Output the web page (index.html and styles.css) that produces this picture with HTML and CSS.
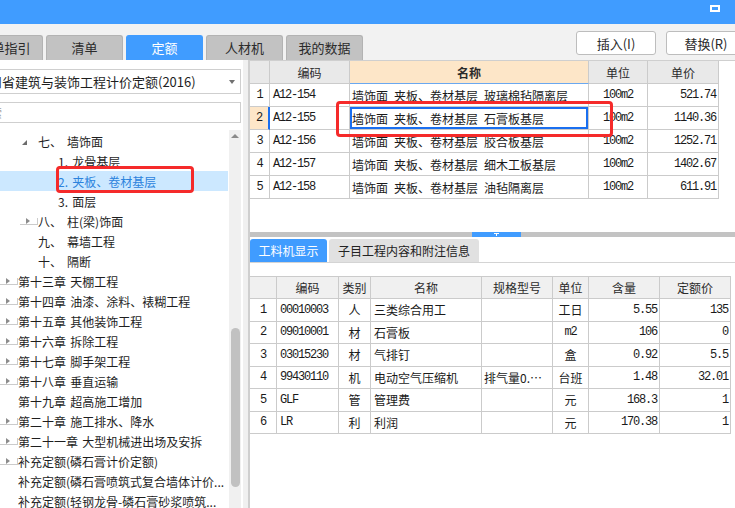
FILE: index.html
```html
<!DOCTYPE html>
<html lang="zh-CN">
<head>
<meta charset="utf-8">
<title>定额</title>
<link rel="stylesheet" href="styles.css">
</head>
<body>
<div class="titlebar"><span class="restore"></span></div>
<div class="toolbar">
  <div class="tabs">
    <div class="tab">清单指引</div>
    <div class="tab">清单</div>
    <div class="tab active">定额</div>
    <div class="tab">人材机</div>
    <div class="tab">我的数据</div>
  </div>
  <div class="actions">
    <button class="btn">插入(I)</button>
    <button class="btn">替换(R)</button>
  </div>
</div>
<div class="main">
  <aside class="left">
    <div class="select"><span class="select-text">四川省建筑与装饰工程计价定额(2016)</span><span class="caret"></span></div>
    <div class="search"><span class="search-text">索</span></div>
    <div class="tree-wrap">
      <ul class="tree">
        <li class="row l1"><span class="tw e"></span><span>七、</span><span class="ttl">墙饰面</span></li>
        <li class="row l2"><span class="tw"></span><span>1. 龙骨基层</span></li>
        <li class="row l2 sel"><span class="tw"></span><span>2. 夹板、卷材基层</span></li>
        <li class="row l2"><span class="tw"></span><span>3. 面层</span></li>
        <li class="row l1"><span class="tw c"></span><span>八、</span><span class="ttl">柱(梁)饰面</span></li>
        <li class="row l1"><span class="tw"></span><span>九、</span><span class="ttl">幕墙工程</span></li>
        <li class="row l1"><span class="tw"></span><span>十、</span><span class="ttl">隔断</span></li>
        <li class="row"><span class="tw c"></span><span>第十三章 天棚工程</span></li>
        <li class="row"><span class="tw c"></span><span>第十四章 油漆、涂料、裱糊工程</span></li>
        <li class="row"><span class="tw c"></span><span>第十五章 其他装饰工程</span></li>
        <li class="row"><span class="tw c"></span><span>第十六章 拆除工程</span></li>
        <li class="row"><span class="tw c"></span><span>第十七章 脚手架工程</span></li>
        <li class="row"><span class="tw c"></span><span>第十八章 垂直运输</span></li>
        <li class="row"><span class="tw"></span><span>第十九章 超高施工增加</span></li>
        <li class="row"><span class="tw c"></span><span>第二十章 施工排水、降水</span></li>
        <li class="row"><span class="tw c"></span><span>第二十一章 大型机械进出场及安拆</span></li>
        <li class="row"><span class="tw c"></span><span>补充定额(磷石膏计价定额)</span></li>
        <li class="row"><span class="tw"></span><span>补充定额(磷石膏喷筑式复合墙体计价...</span></li>
        <li class="row"><span class="tw"></span><span>补充定额(轻钢龙骨-磷石膏砂浆喷筑...</span></li>
      </ul>
      <div class="vscroll"><span class="up"></span><span class="thumb"></span></div>
    </div>
  </aside>
  <div class="splitter"></div>
  <section class="right">
    <div class="upper">
      <div class="grid g1">
        <div class="c h"></div><div class="c h">编码</div><div class="c h name">名称</div><div class="c h">单位</div><div class="c h">单价</div>

        <div class="c n mono">1</div><div class="c mono">A12-154</div><div class="c nm">墙饰面 夹板、卷材基层 玻璃棉毡隔离层</div><div class="c ctr mono">100m2</div><div class="c r mono">521.74</div>
        <div class="c n mono cur">2</div><div class="c mono">A12-155</div><div class="c nm focus">墙饰面 夹板、卷材基层 石膏板基层</div><div class="c ctr mono">100m2</div><div class="c r mono">1140.36</div>
        <div class="c n mono">3</div><div class="c mono">A12-156</div><div class="c nm">墙饰面 夹板、卷材基层 胶合板基层</div><div class="c ctr mono">100m2</div><div class="c r mono">1252.71</div>
        <div class="c n mono">4</div><div class="c mono">A12-157</div><div class="c nm">墙饰面 夹板、卷材基层 细木工板基层</div><div class="c ctr mono">100m2</div><div class="c r mono">1402.67</div>
        <div class="c n mono">5</div><div class="c mono">A12-158</div><div class="c nm">墙饰面 夹板、卷材基层 油毡隔离层</div><div class="c ctr mono">100m2</div><div class="c r mono">611.91</div>
      </div>
    </div>
    <div class="hbar"><span class="handle"><span class="grip"></span></span></div>
    <div class="subtabs">
      <div class="stab active">工料机显示</div>
      <div class="stab">子目工程内容和附注信息</div>
    </div>
    <div class="lower">
      <div class="grid g2">
        <div class="c h"></div><div class="c h">编码</div><div class="c h">类别</div><div class="c h">名称</div><div class="c h">规格型号</div><div class="c h">单位</div><div class="c h">含量</div><div class="c h">定额价</div>

        <div class="c n mono">1</div><div class="c mono">00010003</div><div class="c ctr">人</div><div class="c">三类综合用工</div><div class="c"></div><div class="c ctr">工日</div><div class="c r mono">5.55</div><div class="c r mono">135</div>
        <div class="c n mono">2</div><div class="c mono">09010001</div><div class="c ctr">材</div><div class="c">石膏板</div><div class="c"></div><div class="c ctr mono">m2</div><div class="c r mono">106</div><div class="c r mono">0</div>
        <div class="c n mono">3</div><div class="c mono">03015230</div><div class="c ctr">材</div><div class="c">气排钉</div><div class="c"></div><div class="c ctr">盒</div><div class="c r mono">0.92</div><div class="c r mono">5.5</div>
        <div class="c n mono">4</div><div class="c mono">99430110</div><div class="c ctr">机</div><div class="c">电动空气压缩机</div><div class="c spec">排气量0.…</div><div class="c ctr">台班</div><div class="c r mono">1.48</div><div class="c r mono">32.01</div>
        <div class="c n mono">5</div><div class="c mono">GLF</div><div class="c ctr">管</div><div class="c">管理费</div><div class="c"></div><div class="c ctr">元</div><div class="c r mono">168.3</div><div class="c r mono">1</div>
        <div class="c n mono">6</div><div class="c mono">LR</div><div class="c ctr">利</div><div class="c">利润</div><div class="c"></div><div class="c ctr">元</div><div class="c r mono">170.38</div><div class="c r mono">1</div>
      </div>
    </div>
  </section>
</div>
<div class="mark mark-left"></div>
<div class="mark mark-right"></div>
</body>
</html>
```
FILE: styles.css
```css
* { box-sizing: border-box; }
html, body { margin: 0; padding: 0; }
body {
  width: 735px;
  height: 508px;
  overflow: hidden;
  position: relative;
  background: #fff;
  font-family: "Noto Sans CJK SC", "Microsoft YaHei", sans-serif;
  font-size: 12px;
  color: #1e1e1e;
}

/* title bar */
.titlebar {
  height: 24px;
  background: #409cff;
  display: flex;
  justify-content: flex-end;
  align-items: flex-start;
  padding: 5px 15px 0 0;
}
.restore {
  width: 10px;
  height: 7px;
  border: 2px solid #fff;
}

/* toolbar with tabs */
.toolbar {
  height: 36px;
  background: #f2f2f2;
  display: flex;
}
.tabs {
  display: flex;
  gap: 3px;
  margin-left: -34px;
  align-self: flex-end;
}
.tab {
  width: 77px;
  height: 25px;
  background: #c2c2c2;
  border: 1px solid #b3b3b3;
  border-bottom: none;
  border-radius: 3px 3px 0 0;
  font-size: 13px;
  line-height: 24px;
  text-align: center;
  color: #2b2b2b;
  white-space: nowrap;
}
.tab.active {
  background: #409cff;
  border-color: #409cff;
  color: #fff;
}
.actions {
  margin-left: auto;
  margin-right: -11px;
  margin-top: 7px;
  align-self: flex-start;
  display: flex;
  gap: 10px;
}
.btn {
  width: 80px;
  height: 24px;
  padding: 0;
  background: #fff;
  border: 1px solid #bdbdbd;
  border-radius: 3px;
  font-family: "Noto Sans CJK SC", sans-serif;
  font-size: 13px;
  color: #2b2b2b;
}

/* main */
.main {
  display: flex;
  height: 448px;
}
.left {
  width: 243px;
  flex: none;
  background: #fff;
  padding-top: 9px;
  display: flex;
  flex-direction: column;
  overflow: hidden;
}
.select {
  margin-left: -1px;
  width: 242px;
  height: 25px;
  border: 1px solid #cfcfcf;
  display: flex;
  align-items: center;
  overflow: hidden;
}
.select-text {
  margin-left: -24px;
  font-size: 13px;
  white-space: nowrap;
  color: #1e1e1e;
}
.caret {
  margin-left: auto;
  margin-right: 5px;
  width: 0;
  height: 0;
  border-left: 3px solid transparent;
  border-right: 3px solid transparent;
  border-top: 4px solid #707070;
}
.search {
  margin: 8px 0 0 -1px;
  width: 242px;
  height: 21px;
  border: 1px solid #cfcfcf;
  display: flex;
  align-items: center;
  overflow: hidden;
}
.search-text {
  margin-left: -10px;
  color: #9a9a9a;
  font-size: 12px;
}
.tree-wrap {
  margin-top: 7px;
  flex: 1;
  display: flex;
  min-height: 0;
}
.tree {
  list-style: none;
  margin: 0;
  padding: 1px 0 0;
  width: 229px;
  flex: none;
}
.row {
  height: 20px;
  display: flex;
  align-items: center;
  white-space: nowrap;
  word-spacing: 1.5px;
  width: 228px;
}
.row.l1 { padding-left: 20px; }
.row.l2 { padding-left: 40px; }
.row .ttl { margin-left: 5px; }
.row.sel {
  background: #cce8ff;
  color: #2b83dd;
}
.tw {
  width: 18px;
  flex: none;
  display: flex;
  align-items: center;
}
.tw.c::before {
  content: "";
  margin-left: 3px;
  border-left: 4px solid #8c8c8c;
  border-top: 3px solid transparent;
  border-bottom: 3px solid transparent;
}
.tw.e::before {
  content: "";
  margin-left: 2px;
  margin-top: 2px;
  border-right: 5px solid #6c6c6c;
  border-top: 5px solid transparent;
}
.vscroll {
  width: 12px;
  flex: none;
  background: #f0f0f0;
  display: flex;
  flex-direction: column;
  align-items: center;
}
.up {
  margin-top: 4px;
  width: 0;
  height: 0;
  border-left: 4px solid transparent;
  border-right: 4px solid transparent;
  border-bottom: 4px solid #8a8a8a;
}
.thumb {
  margin-top: 190px;
  width: 9px;
  height: 159px;
  border-radius: 5px;
  background: #c1c1c1;
}
.splitter {
  width: 5px;
  flex: none;
  background: #f0f0f0;
}

/* right side */
.right {
  flex: 1;
  border-left: 2px solid #cfcfcf;
  display: flex;
  flex-direction: column;
  min-width: 0;
}
.upper {
  height: 172px;
  flex: none;
  border-top: 1px solid #cfcfcf;
}
.grid { display: grid; }
.g1 {
  grid-template-columns: 20px 80px 239px 59px 71px;
  grid-auto-rows: 23px;
  width: 469px;
}
.g2 {
  grid-template-columns: 27px 62px 32px 111px 71px 36px 71px 71px;
  grid-template-rows: 22px;
  grid-auto-rows: 22.5px;
  width: 481px;
  border-top: 1px solid #cbcbcb;
}
.c {
  border-right: 1px solid #cbcbcb;
  border-bottom: 1px solid #cbcbcb;
  display: flex;
  align-items: center;
  padding: 0 3px;
  overflow: hidden;
  white-space: nowrap;
  font-size: 12px;
  color: #1a1a1a;
}
.c.h {
  justify-content: center;
  background: #e9e9e9;
  color: #2b2b2b;
}
.g2 .c.h { background: #f0f0f0; }
.c.h.name {
  background: #fde6c8;
  font-weight: bold;
  border-bottom-color: #6aa8f0;
}
.c.n { justify-content: center; padding: 0; }
.c.ctr { justify-content: center; }
.c.r { justify-content: flex-end; }
.c.nm { padding-left: 2px; word-spacing: 3.3px; }
.c.spec { padding-left: 2px; }
.mono {
  font-family: "Liberation Mono", "DejaVu Sans Mono", monospace;
  font-size: 12px;
  letter-spacing: -1.2px;
}
.c.r.mono { padding-right: 2px; }
.c.cur {
  background: #fde6c8;
  border-right: 2px solid #1a6ff0;
}
.c.focus { box-shadow: inset 0 0 0 2px #1a6ff0; }

.hbar {
  height: 5px;
  flex: none;
  background: #c3c3c3;
  display: flex;
}
.handle {
  margin-left: 222px;
  width: 49px;
  height: 5px;
  background: #409cff;
  display: flex;
  justify-content: center;
}
.grip {
  margin-top: 1px;
  width: 5px;
  height: 1px;
  background: #fff;
  position: relative;
}
.grip::after {
  content: "";
  position: absolute;
  left: 2px;
  top: 1px;
  width: 1px;
  height: 2px;
  background: #fff;
}
.subtabs {
  height: 26px;
  flex: none;
  padding-top: 2px;
  display: flex;
  gap: 2px;
  border-bottom: 1px solid #d4d4d4;
}
.stab {
  width: 150px;
  height: 23px;
  line-height: 23px;
  text-align: center;
  font-size: 12px;
  border-radius: 3px 3px 0 0;
  background: #e1e1e1;
  color: #222;
  white-space: nowrap;
}
.stab.active {
  width: 77px;
  background: #409cff;
  color: #fff;
}
.lower {
  flex: 1;
  padding-top: 13px;
}

/* red annotation boxes */
.mark {
  position: absolute;
  border: 3px solid #f52a2a;
  border-radius: 4px;
}
.mark-left { left: 56px; top: 166px; width: 138px; height: 27px; }
.mark-right { left: 336px; top: 101px; width: 277px; height: 36px; }
```
